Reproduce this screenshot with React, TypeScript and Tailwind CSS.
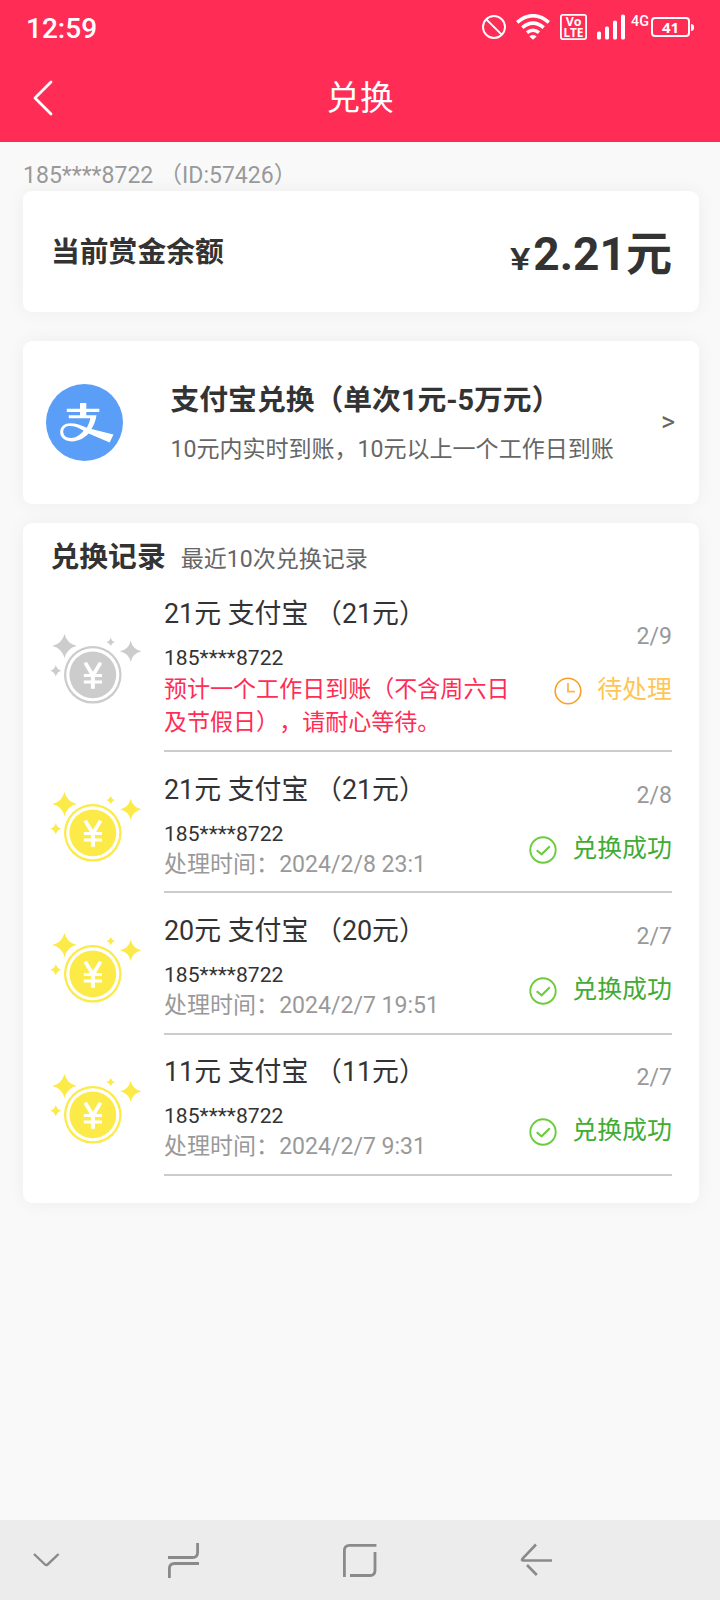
interface ExchangeRecord {
  id: number
  title: string
  account: string
  note: string
  date: string
  status: 'pending' | 'success'
}

const records: ExchangeRecord[] = [
  {
    id: 1,
    title: '21元 支付宝 （21元）',
    account: '185****8722',
    note: '预计一个工作日到账（不含周六日及节假日），请耐心等待。',
    date: '2/9',
    status: 'pending'
  },
  {
    id: 2,
    title: '21元 支付宝 （21元）',
    account: '185****8722',
    note: '处理时间：2024/2/8 23:1',
    date: '2/8',
    status: 'success'
  },
  {
    id: 3,
    title: '20元 支付宝 （20元）',
    account: '185****8722',
    note: '处理时间：2024/2/7 19:51',
    date: '2/7',
    status: 'success'
  },
  {
    id: 4,
    title: '11元 支付宝 （11元）',
    account: '185****8722',
    note: '处理时间：2024/2/7 9:31',
    date: '2/7',
    status: 'success'
  }
]

function StatusBar() {
  return (
    <div className="flex h-[54px] items-center pl-[26px] pr-[26px] text-white">
      <span className="pt-[3px] text-[28px] leading-[54px] font-medium">12:59</span>
      <div className="ml-auto flex items-center">
        <svg width="24" height="26" viewBox="0 0 24 26" fill="none" stroke="currentColor" strokeWidth="1.9">
          <circle cx="12" cy="13" r="11" />
          <path d="M4.3 5.3 19.7 20.7" />
        </svg>
        <svg className="ml-[10px]" width="34" height="26" viewBox="0 0 34 26" fill="none" stroke="currentColor" strokeWidth="3.6">
          <path d="M1.2 8.3Q17-4.8 32.8 8.3" />
          <path d="M6.3 13.6Q17 4.8 27.7 13.6" />
          <path d="M11 18.6Q17 13.9 23 18.6" />
          <path d="M13.4 22.4Q17 19.8 20.6 22.4L17 25.8Z" fill="currentColor" stroke="none" />
        </svg>
        <svg className="ml-[10px]" width="27" height="26" viewBox="0 0 27 26" fill="none">
          <rect x="0.9" y="0.9" width="25.2" height="24.2" rx="2" stroke="currentColor" strokeWidth="1.8" />
          <text textAnchor="middle" fill="currentColor" className="font-['Noto_Sans'] text-[12.5px] font-bold">
            <tspan x="13.7" y="12">Vo</tspan>
            <tspan x="13.5" y="23.3" textLength="20" lengthAdjust="spacingAndGlyphs">LTE</tspan>
          </text>
        </svg>
        <svg className="ml-[10px]" width="28" height="26" viewBox="0 0 28 26" fill="currentColor">
          <rect x="0" y="17.5" width="4" height="8" rx="1.6" />
          <rect x="8" y="12.5" width="4" height="13" rx="1.6" />
          <rect x="16" y="6.5" width="4" height="19" rx="1.6" />
          <rect x="24" y="0.5" width="4" height="25" rx="1.6" />
        </svg>
        <svg className="ml-[6px] overflow-visible" width="18" height="34" viewBox="0 0 18 34">
          <text x="0" y="15.6" textLength="18" lengthAdjust="spacingAndGlyphs" fill="currentColor" className="text-[15.5px] font-medium">
            4G
          </text>
        </svg>
        <div className="ml-[2px] flex h-5 w-[39px] items-center justify-center rounded-[4px] border-2 border-white font-['Noto_Sans'] text-[15px] leading-[16px] font-bold">
          41
        </div>
        <div className="ml-px h-[7px] w-[3px] rounded-r-full bg-white" />
      </div>
    </div>
  )
}

function AlipayLogo() {
  return (
    <svg className="shrink-0" width="77" height="77" viewBox="0 0 77 77" fill="none">
      <circle cx="38.5" cy="38.5" r="38.5" fill="#5a9ef8" />
      <path
        d="M34 19H40.3V24.8H53.3V28H40.3V31.2H50.5C49.6 37.6 47.4 41.8 45.4 45L67.5 50.6L63.7 58.5L42.6 49.6C37 55.4 31 57.6 25.5 57.4C18 57 14 53 14.2 47.8C14.5 42.2 18.5 39.2 24.5 39.2C30 39.2 35 41 40.8 43.7C42.4 41 43.6 38 44.3 34.3H22.8V31.2H34V28H20.8V24.8H34Z"
        fill="#fff"
      />
      <path
        d="M37.6 46.8C33 44 28.5 42 24 42C19.8 42 17.3 44 17.2 47.6C17.1 51.4 20 54 25 54C30 54 34.3 50.8 37.6 46.8Z"
        fill="#5a9ef8"
      />
    </svg>
  )
}

function CoinIcon({ className }: { className: string }) {
  return (
    <svg className={className} width="92" height="70" viewBox="-1 0 92 70" fill="currentColor">
      <path d="M13.5-.2Q15.8 9.7 25.8 12Q15.8 14.3 13.5 24.2Q11.2 14.3 1.2 12Q11.2 9.7 13.5-.2Z" />
      <path d="M79.7 6.8Q81.7 15.4 90.4 17.3Q81.7 19.2 79.7 27.9Q77.7 19.2 69 17.3Q77.7 15.4 79.7 6.8Z" />
      <path d="M59.7 4Q60.6 7.1 63.9 8Q60.6 8.9 59.7 12Q58.8 8.9 55.5 8Q58.8 7.1 59.7 4Z" />
      <path d="M4.8 31Q6 35.6 10.4 36.7Q6 37.8 4.8 42.5Q3.6 37.8-.8 36.7Q3.6 35.6 4.8 31Z" />
      <circle cx="41.8" cy="40.8" r="28.8" />
      <circle cx="41.8" cy="40.8" r="26.5" fill="#fff" />
      <circle cx="41.8" cy="40.8" r="23.4" />
      <path d="M34.2 28.6 41.9 41.5 49.6 28.6" fill="none" stroke="#fff" strokeWidth="3.8" />
      <path d="M32.8 41.5H51M32.8 48H51" stroke="#fff" strokeWidth="3" />
      <path d="M41.9 40V54.8" stroke="#fff" strokeWidth="4" />
    </svg>
  )
}

function ClockIcon() {
  return (
    <svg width="28" height="28" viewBox="0 0 28 28" fill="none">
      <circle cx="14" cy="14" r="12.8" stroke="#fb9f22" strokeWidth="1.6" />
      <path d="M14 6V14.6H21" stroke="#fdb75a" strokeWidth="1.9" />
    </svg>
  )
}

function CheckIcon() {
  return (
    <svg width="28" height="28" viewBox="0 0 28 28" fill="none" stroke="#6dcc3d">
      <circle cx="14" cy="14" r="12.7" strokeWidth="1.9" />
      <path d="M7.7 14.2 12.6 18.3 20.8 10.2" strokeWidth="2.1" />
    </svg>
  )
}

function RecordRow({ record }: { record: ExchangeRecord }) {
  const pending = record.status === 'pending'

  return (
    <div className="flex items-center gap-[22px]">
      <CoinIcon
        className={
          pending
            ? '-ml-px mt-[9px] shrink-0 text-[#cccccc]'
            : '-ml-px mt-[8px] shrink-0 text-[#fbea48]'
        }
      />
      <div className="flex flex-1 items-center justify-between border-b-2 border-[#cccccc] pt-[9.6px] pb-[10.6px]">
        <div className="w-[350px]">
          <div className="text-[26.88px] leading-[56px] text-[#333333]">{record.title}</div>
          <div className="text-[21.12px] leading-[31px] text-[#333333]">{record.account}</div>
          <div
            className={
              pending
                ? 'text-[23.04px] leading-[33.5px] text-[#ff2d55] [text-spacing-trim:space-all]'
                : 'text-[23.04px] leading-[32px] text-[#999999]'
            }
          >
            {record.note}
          </div>
        </div>
        <div className="flex flex-col items-end whitespace-nowrap pt-px">
          <span className="text-[23.04px] leading-[53px] text-[#999999]">{record.date}</span>
          <div className="flex items-center gap-[15.5px]">
            <span className="mt-[3px]">{pending ? <ClockIcon /> : <CheckIcon />}</span>
            <span
              className={
                pending
                  ? 'text-[24.96px] leading-[53px] text-[#ffc655]'
                  : 'text-[24.96px] leading-[53px] text-[#41ab34]'
              }
            >
              {pending ? '待处理' : '兑换成功'}
            </span>
          </div>
        </div>
      </div>
    </div>
  )
}

function NavBar() {
  return (
    <nav className="flex h-20 items-center bg-[#ececec] text-[#8a8a8a]">
      <svg className="ml-[32px]" width="28" height="36" viewBox="0 0 28 36" fill="none" stroke="currentColor" strokeWidth="2.4">
        <path d="M2 12 13 22.5Q14.3 23.7 15.6 22.5L26.6 12" />
      </svg>
      <svg className="ml-[107px]" width="34" height="36" viewBox="0 0 34 36" fill="none" stroke="currentColor" strokeWidth="2.8">
        <path d="M1 15.5H25.5Q30.6 15.5 30.6 10.4V1" />
        <path d="M32 21.5H7.5Q2.4 21.5 2.4 26.6V36" />
      </svg>
      <svg className="ml-[141px]" width="35" height="36" viewBox="0 0 35 36" fill="none" stroke="currentColor" strokeWidth="2.8">
        <path d="M34.4 3.4H7.5Q2.4 3.4 2.4 8.5V35" />
        <path d="M33 10V28.4Q33 33.5 27.9 33.5H8" />
      </svg>
      <svg className="ml-[143px]" width="34" height="36" viewBox="0 0 34 36" fill="none" stroke="currentColor" strokeWidth="2.6">
        <path d="M16 2.5 2.6 16.6Q1 18.5 3.4 18.5H32" />
        <path d="M7 23 16.8 33" />
      </svg>
    </nav>
  )
}

export default function App() {
  return (
    <div
      lang="zh-CN"
      className="flex min-h-[1600px] w-[720px] flex-col bg-[#f9f9f9] font-['Roboto','Noto_Sans_CJK_SC',sans-serif]"
    >
      <header className="h-[142px] bg-[#ff2d55] text-white">
        <StatusBar />
        <div className="grid h-[88px] grid-cols-3 items-center">
          <svg className="ml-[31px]" width="22" height="36" viewBox="0 0 22 36" fill="none" stroke="currentColor" strokeWidth="2.8" strokeLinecap="round" strokeLinejoin="round">
            <path d="M20 2 4 18 20 34" />
          </svg>
          <h1 className="pt-px text-center text-[33.6px] leading-[84px]">兑换</h1>
        </div>
      </header>

      <main className="flex-1 px-[23px] pr-[21px]">
        <div className="flex h-[49px] items-end text-[23.04px] leading-[30px] text-[#999999]">
          <span className="whitespace-pre">185****8722 （ID:57426）</span>
        </div>

        {/* Balance */}
        <section className="flex h-[121px] items-center justify-between rounded-[9px] bg-white pr-[27px] pl-[28px] font-bold text-[#333333] shadow-[0_0_19px_rgba(0,0,0,0.05)]">
          <span className="pt-[2px] text-[28.8px]">当前赏金余额</span>
          <span className="flex items-baseline pt-[10px] text-[46.08px] leading-[60px]">
            <span className="mr-[3px] inline-block origin-right scale-x-125 text-[30.72px] font-medium">¥</span>
            2.21元
          </span>
        </section>

        {/* Alipay entry */}
        <section className="mt-[29px] flex h-[163px] items-center rounded-[9px] bg-white pr-6 pl-[23px] shadow-[0_0_19px_rgba(0,0,0,0.05)]">
          <AlipayLogo />
          <div className="ml-[47.5px] pt-[4px]">
            <div className="text-[28.8px] leading-[51px] font-bold text-[#333333]">支付宝兑换（单次1元-5万元）</div>
            <div className="text-[23.04px] leading-[48px] text-[#666666]">10元内实时到账，10元以上一个工作日到账</div>
          </div>
          <span className="ml-auto text-[26.88px] text-[#666666]">&gt;</span>
        </section>

        {/* History */}
        <section className="mt-[19px] rounded-[9px] bg-white pr-[27px] pb-[27px] pl-[28px] shadow-[0_0_19px_rgba(0,0,0,0.05)]">
          <div className="-ml-[0.5px] flex h-[53px] items-baseline gap-[15px] pt-[17px] leading-[34px]">
            <h2 className="text-[28.8px] font-bold text-[#333333]">兑换记录</h2>
            <span className="text-[23.04px] text-[#666666]">最近10次兑换记录</span>
          </div>
          {records.map((record) => (
            <RecordRow key={record.id} record={record} />
          ))}
        </section>
      </main>

      <NavBar />
    </div>
  )
}
